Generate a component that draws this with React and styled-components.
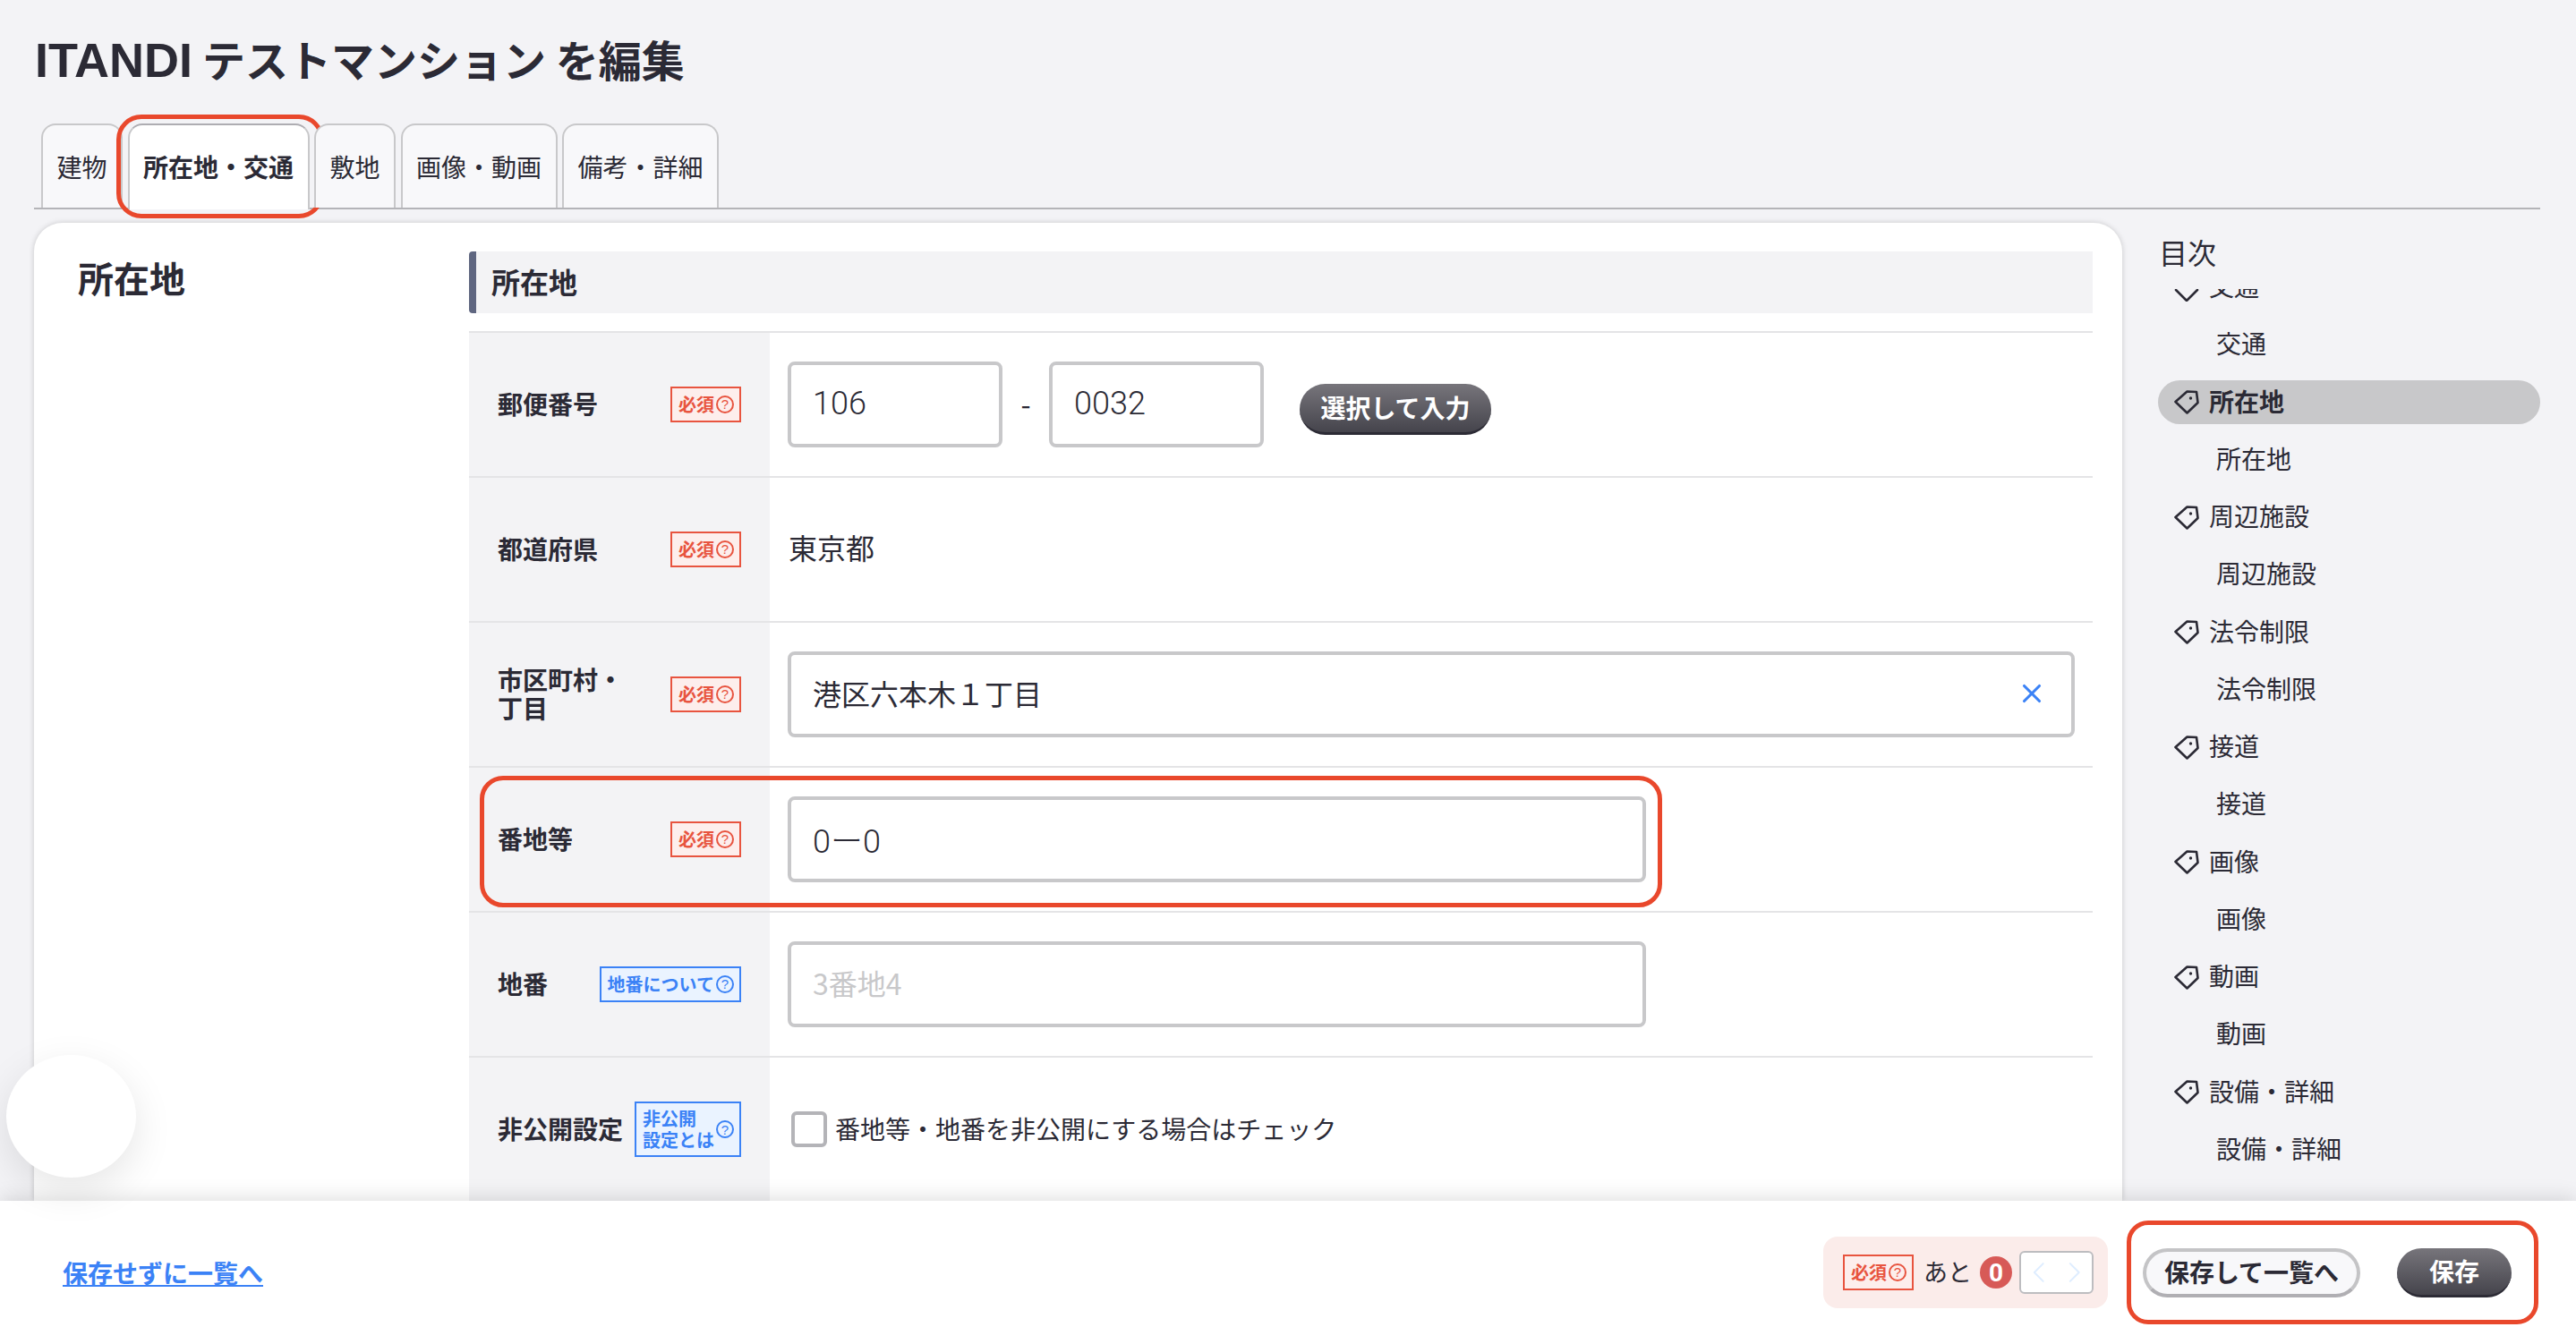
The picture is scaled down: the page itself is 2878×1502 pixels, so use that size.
import React from 'react';
import styled, { createGlobalStyle } from 'styled-components';
import { X, ChevronLeft, ChevronRight } from 'lucide-react';

const GlobalStyle = createGlobalStyle`
  html, body {
    margin: 0;
    padding: 0;
    background: #f3f3f6;
  }
  *, *::before, *::after {
    box-sizing: border-box;
  }
`;

const INK = '#2b2a35';
const RED = '#e9482c';
const BLUE = '#3b82f6';
const FONT = '"Noto Sans CJK JP", "Liberation Sans", sans-serif';
const DIGITS = 'Roboto, "Noto Sans CJK JP", sans-serif';

const Page = styled.div`
  position: relative;
  width: 2878px;
  height: 1502px;
  overflow: hidden;
  display: flex;
  flex-direction: column;
  background: #f3f3f6;
  color: ${INK};
  font-family: ${FONT};
`;

const Main = styled.main`
  flex: 1;
  min-height: 0;
  padding: 0 40px 0 38px;
  display: flex;
  flex-direction: column;
`;

const Title = styled.h1`
  margin: 0;
  height: 138px;
  padding: 36px 0 0 1px;
  font-size: 48px;
  line-height: 58px;
  font-weight: 700;
`;

const TitleLatin = styled.span`
  font-family: "Liberation Sans", sans-serif;
  font-size: 54px;
  font-weight: 700;
`;

const TabBar = styled.nav`
  display: flex;
  height: 96px;
  padding-left: 8px;
  gap: 5.5px;
  border-bottom: 2px solid #b4b4b8;
`;

const Tab = styled.div`
  position: relative;
  height: ${(p) => (p.$active ? '96px' : '94px')};
  padding: 23px 15.5px 0;
  font-size: 28px;
  line-height: 46px;
  font-weight: ${(p) => (p.$active ? 700 : 400)};
  background: ${(p) => (p.$active ? '#fff' : '#f8f8fa')};
  border: 2px solid #c8c8ca;
  border-top-color: ${(p) => (p.$active ? '#aeadb2' : '#c8c8ca')};
  border-bottom: 0;
  border-radius: 16px 16px 0 0;

  ${(p) =>
    p.$active &&
    `
    &::after {
      content: '';
      position: absolute;
      left: -15px;
      right: -18px;
      top: -12px;
      bottom: -10px;
      border: 5px solid ${RED};
      border-radius: 28px;
      pointer-events: none;
    }
  `}
`;

const Content = styled.div`
  flex: 1;
  min-height: 0;
  display: flex;
  margin-top: 15px;
`;

const Card = styled.section`
  width: 2333px;
  flex: none;
  display: flex;
  padding: 32px 33px 0 0;
  background: #fff;
  border-radius: 32px 32px 0 0;
  box-shadow: 0 0 6px rgba(0, 0, 0, 0.18);
`;

const CardSide = styled.h2`
  width: 486px;
  flex: none;
  margin: 0;
  padding: 4px 0 0 49px;
  font-size: 40px;
  line-height: 50px;
  font-weight: 700;
`;

const Form = styled.div`
  flex: 1;
  min-width: 0;
`;

const SectionHead = styled.h3`
  margin: 0 0 20px;
  height: 69px;
  padding: 0 0 4px 17px;
  display: flex;
  align-items: center;
  font-size: 32px;
  font-weight: 700;
  background: #f3f3f5;
  border-left: 8px solid #5f6680;
  border-radius: 4px 0 0 4px;
`;

const Rows = styled.div`
  border-top: 2px solid #e4e4e6;
`;

const Row = styled.div`
  position: relative;
  display: grid;
  grid-template-columns: 336px 1fr;
  height: 162px;
  border-bottom: 2px solid #e4e4e6;

  ${(p) =>
    p.$outlined &&
    `
    &::after {
      content: '';
      position: absolute;
      left: 12px;
      top: 9px;
      width: 1321px;
      height: 147px;
      border: 5px solid ${RED};
      border-radius: 26px;
      pointer-events: none;
    }
  `}
`;

const Label = styled.div`
  display: flex;
  align-items: center;
  justify-content: space-between;
  padding: 0 32px;
  background: #f3f3f5;
`;

const LabelText = styled.span`
  padding-bottom: 3px;
  font-size: 28px;
  line-height: 32px;
  font-weight: 700;
  max-width: ${(p) => (p.$narrow ? '148px' : 'none')};
`;

const Badge = styled.span`
  display: inline-flex;
  align-items: center;
  gap: 2px;
  min-height: 40px;
  padding: 1px 6px 2px 7px;
  font-size: 20px;
  line-height: 24px;
  font-weight: 700;
  color: ${(p) => (p.$blue ? BLUE : '#e8543f')};
  background: ${(p) => (p.$blue ? '#eaf3ff' : '#fdeeec')};
  border: 2px solid ${(p) => (p.$blue ? BLUE : '#e8543f')};
`;

const TwoLineBadge = styled(Badge)`
  padding: 5px 6px 5px 7px;
`;

const HelpMark = styled.span`
  flex: none;
  width: 20px;
  height: 20px;
  display: inline-flex;
  align-items: center;
  justify-content: center;
  font-family: "Liberation Sans", sans-serif;
  font-size: 15px;
  line-height: 1;
  font-weight: 400;
  border: 2px solid currentColor;
  border-radius: 50%;
`;

const Value = styled.div`
  display: flex;
  align-items: center;
  padding-left: 20px;
  font-size: 32px;
`;

const PlainValue = styled.span`
  padding: 0 0 6px 1px;
`;

const FieldBox = styled.div`
  position: relative;
  width: ${(p) => p.$width}px;
  height: 96px;
`;

const Field = styled.input`
  width: 100%;
  height: 100%;
  padding: 0 24px ${(p) => (p.$digits ? '3px' : '5px')};
  font-family: ${(p) => (p.$digits ? DIGITS : FONT)};
  font-size: ${(p) => (p.$digits ? '36px' : '32px')};
  font-weight: ${(p) => (p.$digits ? 300 : 400)};
  color: ${INK};
  background: #fff;
  border: 4px solid #c8c8ca;
  border-radius: 8px;
  outline: none;

  &::placeholder {
    color: #c8c8ca;
  }
`;

const ClearIcon = styled(X)`
  position: absolute;
  right: 31px;
  top: 30px;
  color: ${BLUE};
`;

const Dash = styled.span`
  width: 52px;
  text-align: center;
  font-size: 32px;
  padding-bottom: 4px;
`;

const DarkButton = styled.button`
  height: ${(p) => p.$height}px;
  width: ${(p) => p.$width}px;
  flex: none;
  padding: 0 0 2px;
  font-family: ${FONT};
  font-size: 28px;
  font-weight: 700;
  color: #fff;
  background: linear-gradient(#77757b, #45444c);
  border: 0;
  border-bottom: 3px solid #2c2b35;
  border-radius: 999px;
`;

const SelectButton = styled(DarkButton)`
  margin: 10px 0 0 40px;
`;

const CheckRow = styled.label`
  display: flex;
  align-items: center;
  gap: 9px;
  margin-left: 4px;
  font-size: 28px;
`;

const CheckBox = styled.span`
  width: 40px;
  height: 40px;
  background: #fff;
  border: 4px solid #b4b4b8;
  border-radius: 6px;
`;

const CheckText = styled.span`
  padding-bottom: 3px;
`;

const Toc = styled.aside`
  flex: 1;
  min-width: 0;
  display: flex;
  flex-direction: column;
  padding: 9px 0 24px 40px;
`;

const TocTitle = styled.div`
  height: 65px;
  padding-left: 1px;
  font-size: 32px;
  line-height: 46px;
`;

const TocScroll = styled.div`
  flex: 1;
  min-height: 0;
  overflow: hidden;
`;

const TocList = styled.ul`
  list-style: none;
  margin: -27px 0 0;
  padding: 0;
  display: flex;
  flex-direction: column;
  gap: 15.25px;
`;

const TocItem = styled.li`
  width: 427px;
  height: 49px;
  flex: none;
  display: flex;
  align-items: center;
  gap: 11px;
  padding-left: ${(p) => (p.$sub ? '65px' : '18px')};
  font-size: 28px;
  font-weight: ${(p) => (p.$active ? 700 : 400)};
  background: ${(p) => (p.$active ? '#c8c8ca' : 'transparent')};
  border-radius: 25px;
`;

const TocName = styled.span`
  padding-bottom: 3px;
`;

const TocIcon = styled.svg`
  flex: none;
  width: 28px;
  color: ${INK};
  fill: none;
  stroke: currentColor;
  stroke-width: 2.6;
  stroke-linejoin: round;
  stroke-linecap: round;
`;

const Footer = styled.footer`
  position: relative;
  z-index: 1;
  height: 160px;
  flex: none;
  display: flex;
  align-items: center;
  padding: 0 42px 0 70px;
  background: #fff;
  box-shadow: 0 -2px 22px rgba(0, 0, 0, 0.14);
`;

const BackLink = styled.a`
  font-size: 28px;
  font-weight: 700;
  color: ${BLUE};
  text-decoration: underline;
`;

const Remaining = styled.div`
  width: 318px;
  height: 80px;
  margin: 0 21px 0 auto;
  padding-left: 22px;
  display: flex;
  align-items: center;
  font-size: 27px;
  background: #fbecea;
  border-radius: 16px;
`;

const RemainingText = styled.span`
  margin: 0 9px 3px 11px;
  white-space: nowrap;
`;

const Count = styled.span`
  width: 36px;
  height: 36px;
  flex: none;
  display: flex;
  align-items: center;
  justify-content: center;
  margin-right: 8px;
  font-family: Roboto, sans-serif;
  font-size: 28px;
  font-weight: 700;
  color: #fff;
  background: #d75a57;
  border-radius: 50%;
`;

const Pager = styled.div`
  width: 83px;
  height: 48px;
  flex: none;
  display: flex;
  align-items: center;
  justify-content: center;
  color: #deedff;
  background: #fff;
  border: 2px solid #bdbdc0;
  border-radius: 6px;
`;

const ActionsOutline = styled.div`
  width: 460px;
  height: 116px;
  display: flex;
  align-items: center;
  gap: 41px;
  padding-left: 13px;
  border: 5px solid ${RED};
  border-radius: 24px;
`;

const LightButton = styled.button`
  width: 243px;
  height: 55px;
  flex: none;
  padding: 0 0 2px;
  font-family: ${FONT};
  font-size: 28px;
  font-weight: 700;
  color: ${INK};
  background: #f8f8fa;
  border: 4px solid #c4c4c6;
  border-bottom-color: #b0afb3;
  border-radius: 999px;
`;

const FloatingDisc = styled.div`
  position: absolute;
  z-index: 2;
  left: 7px;
  top: 1179px;
  width: 145px;
  height: 137px;
  background: #fff;
  border-radius: 50%;
  box-shadow: 0 14px 44px rgba(0, 0, 0, 0.1);
`;

const TagIcon = () => (
  <TocIcon viewBox="0 0 28 28" height="28">
    <path d="M1.5 14 L14.5 2.5 L25 3 L26.5 15 L14.5 26.5 Z" />
    <circle cx="18.5" cy="10" r="1.7" fill="currentColor" stroke="none" />
  </TocIcon>
);

const OpenIcon = () => (
  <TocIcon viewBox="0 0 28 32" height="32">
    <path d="M2 19 L14 31 L26 19" />
  </TocIcon>
);

const Required = () => (
  <Badge>
    必須<HelpMark>?</HelpMark>
  </Badge>
);

const tocEntries = [
  ['交通', 'open'],
  ['交通'],
  ['所在地', 'active'],
  ['所在地'],
  ['周辺施設', 'tag'],
  ['周辺施設'],
  ['法令制限', 'tag'],
  ['法令制限'],
  ['接道', 'tag'],
  ['接道'],
  ['画像', 'tag'],
  ['画像'],
  ['動画', 'tag'],
  ['動画'],
  ['設備・詳細', 'tag'],
  ['設備・詳細'],
];

export default function App() {
  return (
    <Page>
      <GlobalStyle />
      <Main>
        <Title><TitleLatin>ITANDI</TitleLatin> テストマンション を編集</Title>
        <TabBar>
          <Tab>建物</Tab>
          <Tab $active>所在地・交通</Tab>
          <Tab>敷地</Tab>
          <Tab>画像・動画</Tab>
          <Tab>備考・詳細</Tab>
        </TabBar>
        <Content>
          <Card>
            <CardSide>所在地</CardSide>
            <Form>
              <SectionHead>所在地</SectionHead>
              <Rows>
                <Row>
                  <Label>
                    <LabelText>郵便番号</LabelText>
                    <Required />
                  </Label>
                  <Value>
                    <FieldBox $width={240}>
                      <Field $digits defaultValue="106" />
                    </FieldBox>
                    <Dash>-</Dash>
                    <FieldBox $width={240}>
                      <Field $digits defaultValue="0032" />
                    </FieldBox>
                    <SelectButton $width={214} $height={57}>選択して入力</SelectButton>
                  </Value>
                </Row>
                <Row>
                  <Label>
                    <LabelText>都道府県</LabelText>
                    <Required />
                  </Label>
                  <Value><PlainValue>東京都</PlainValue></Value>
                </Row>
                <Row>
                  <Label>
                    <LabelText $narrow>市区町村・丁目</LabelText>
                    <Required />
                  </Label>
                  <Value>
                    <FieldBox $width={1438}>
                      <Field defaultValue="港区六本木１丁目" />
                      <ClearIcon size={34} strokeWidth={2.2} />
                    </FieldBox>
                  </Value>
                </Row>
                <Row $outlined>
                  <Label>
                    <LabelText>番地等</LabelText>
                    <Required />
                  </Label>
                  <Value>
                    <FieldBox $width={959}>
                      <Field $digits defaultValue="0ー0" />
                    </FieldBox>
                  </Value>
                </Row>
                <Row>
                  <Label>
                    <LabelText>地番</LabelText>
                    <Badge $blue>
                      地番について<HelpMark>?</HelpMark>
                    </Badge>
                  </Label>
                  <Value>
                    <FieldBox $width={959}>
                      <Field placeholder="3番地4" />
                    </FieldBox>
                  </Value>
                </Row>
                <Row>
                  <Label>
                    <LabelText>非公開設定</LabelText>
                    <TwoLineBadge $blue>
                      <span>非公開<br />設定とは</span>
                      <HelpMark>?</HelpMark>
                    </TwoLineBadge>
                  </Label>
                  <Value>
                    <CheckRow>
                      <CheckBox />
                      <CheckText>番地等・地番を非公開にする場合はチェック</CheckText>
                    </CheckRow>
                  </Value>
                </Row>
              </Rows>
            </Form>
          </Card>
          <Toc>
            <TocTitle>目次</TocTitle>
            <TocScroll>
              <TocList>
                {tocEntries.map(([name, kind], i) => (
                  <TocItem key={i} $sub={!kind} $active={kind === 'active'}>
                    {kind === 'open' && <OpenIcon />}
                    {(kind === 'tag' || kind === 'active') && <TagIcon />}
                    <TocName>{name}</TocName>
                  </TocItem>
                ))}
              </TocList>
            </TocScroll>
          </Toc>
        </Content>
      </Main>
      <Footer>
        <BackLink href="#">保存せずに一覧へ</BackLink>
        <Remaining>
          <Required />
          <RemainingText>あと</RemainingText>
          <Count>0</Count>
          <Pager>
            <ChevronLeft size={40} strokeWidth={1.2} />
            <ChevronRight size={40} strokeWidth={1.2} />
          </Pager>
        </Remaining>
        <ActionsOutline>
          <LightButton>保存して一覧へ</LightButton>
          <DarkButton $width={128} $height={55}>保存</DarkButton>
        </ActionsOutline>
      </Footer>
      <FloatingDisc />
    </Page>
  );
}
